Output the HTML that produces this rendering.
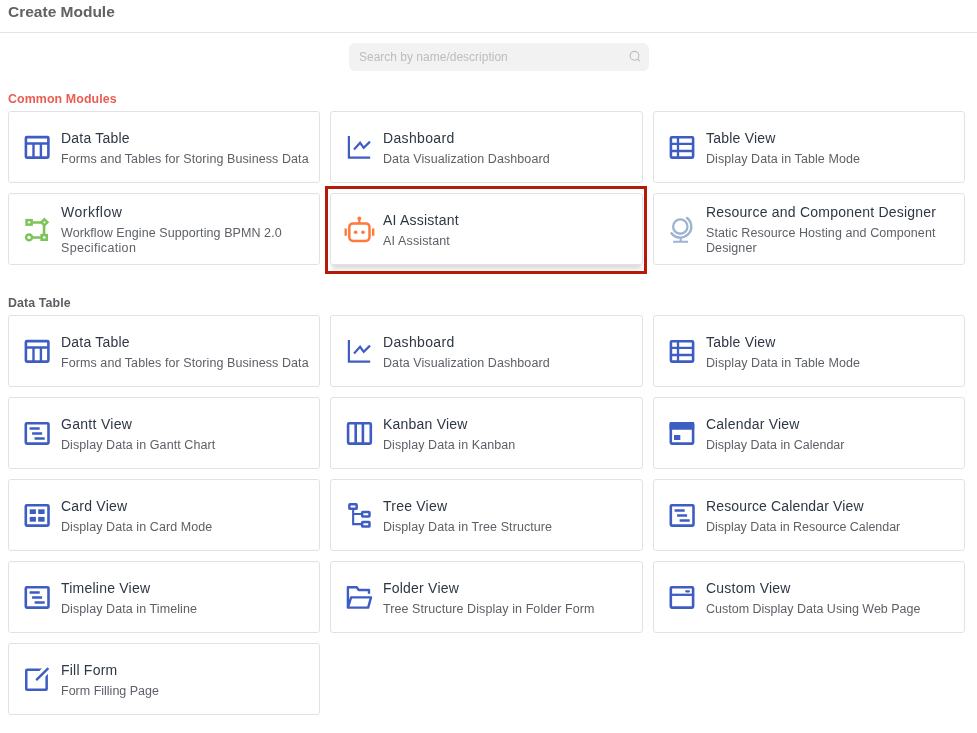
<!DOCTYPE html>
<html><head><meta charset="utf-8"><style>
html,body{margin:0;-webkit-font-smoothing:antialiased;padding:0;background:#fff;width:977px;height:733px;overflow:hidden;position:relative;font-family:"Liberation Sans",sans-serif}
.hdr{will-change:transform;position:absolute;left:8px;top:-0.5px;font-size:15.5px;font-weight:700;color:#616161;line-height:24px}
.hline{position:absolute;left:0;top:32px;width:977px;height:1px;background:#e4e4e4}
.search{will-change:transform;position:absolute;left:349px;top:43px;width:300px;height:28px;background:#f2f2f2;border-radius:6px}
.search .ph{position:absolute;left:10px;top:6px;font-size:12px;line-height:16px;color:#bdbdbd}
.sec{will-change:transform;position:absolute;left:8px;font-size:12.4px;letter-spacing:0.1px;font-weight:700;line-height:16px}
.card{will-change:transform;position:absolute;height:72px;box-sizing:border-box;border:1px solid #e0e2e6;border-radius:3px;background:#fff}
.card .ic{position:absolute;left:-1px;top:-1px}
.card .t{position:absolute;left:52px;font-size:14px;letter-spacing:0.22px;line-height:20px;color:#2e3744;white-space:nowrap}
.card .d{position:absolute;left:52px;font-size:12.5px;letter-spacing:0.08px;line-height:15px;color:#5d6167;white-space:nowrap}
.hl{position:absolute;left:325px;top:186px;width:322px;height:88px;box-sizing:border-box;border:3px solid #b5190a}
</style></head><body>
<div class="hdr">Create Module</div>
<div class="hline"></div>
<div class="search"><div class="ph">Search by name/description</div>
<svg style="position:absolute;left:278px;top:6px" width="16" height="16" viewBox="0 0 16 16"><circle cx="7.5" cy="6.8" r="4.4" stroke="#bcbcbc" stroke-width="1.1" fill="none"/><path d="M10.6 10L12.8 12.2" stroke="#bcbcbc" stroke-width="1.1"/></svg></div>
<div class="sec" style="top:91px;color:#eb5c51">Common Modules</div>
<div class="card" style="left:8px;top:111px;width:312px"><svg class="ic" width="60" height="72" viewBox="0 0 60 72"><rect x="17.9" y="26.1" width="22.5" height="20.5" rx="1" stroke="#3e5dc3" fill="none" stroke-width="2.6"/><path d="M17.9 32.5H40.4M25.5 32.5V46.6M32.9 32.5V46.6" stroke="#3e5dc3" fill="none" stroke-width="2.4"/></svg><div class="t" style="top:16px">Data Table</div><div class="d" style="top:40.3px">Forms and Tables for Storing Business Data</div></div><div class="card" style="left:330px;top:111px;width:313px"><svg class="ic" width="60" height="72" viewBox="0 0 60 72"><path d="M18.9 25.1V46.7H40.2" stroke="#3e5dc3" fill="none" stroke-width="2.2"/><path d="M24 38.5L30.1 31.8L33.7 36.8L40 30.6" stroke="#3e5dc3" fill="none" stroke-width="2.2"/></svg><div class="t" style="top:16px;letter-spacing:0.35px">Dashboard</div><div class="d" style="top:40.3px">Data Visualization Dashboard</div></div><div class="card" style="left:653px;top:111px;width:312px"><svg class="ic" width="60" height="72" viewBox="0 0 60 72"><rect x="17.9" y="26.2" width="22.2" height="20.4" rx="1" stroke="#3e5dc3" fill="none" stroke-width="2.6"/><path d="M17.9 32.9H40.1M17.9 40H40.1M25 26.2V46.6" stroke="#3e5dc3" fill="none" stroke-width="2.3"/></svg><div class="t" style="top:16px">Table View</div><div class="d" style="top:40.3px">Display Data in Table Mode</div></div><div class="card" style="left:8px;top:193px;width:312px"><svg class="ic" width="60" height="72" viewBox="0 0 60 72"><rect x="18.55" y="27.15" width="5.1" height="4.45" stroke="#7cc35a" stroke-width="2.5" fill="none"/><path d="M24.9 29.45H33.2M36.05 32V41.5M24 44.45H33" stroke="#7cc35a" stroke-width="2.6" fill="none"/><path d="M36.4 26.3L39.4 29.3L36.4 32.3L33.4 29.3Z" stroke="#7cc35a" stroke-width="2.5" fill="none"/><circle cx="21.05" cy="44.4" r="2.95" stroke="#7cc35a" stroke-width="2.5" fill="none"/><rect x="33.65" y="42.15" width="5.1" height="4.6" stroke="#7cc35a" stroke-width="2.5" fill="none"/></svg><div class="t" style="top:8px;letter-spacing:0.5px">Workflow</div><div class="d" style="top:32.3px">Workflow Engine Supporting BPMN 2.0<br><span style="letter-spacing:0.33px">Specification</span></div></div><div class="card" style="left:330px;top:193px;width:313px;box-shadow:0 6px 4px -2px rgba(0,0,0,0.14)"><svg class="ic" width="60" height="72" viewBox="0 0 60 72"><rect x="19.3" y="30.4" width="20.2" height="17.5" rx="3.6" stroke="#fd7a3c" stroke-width="2.5" fill="none"/><circle cx="29.3" cy="25.4" r="1.9" fill="#fd7a3c"/><path d="M29.3 25.4V30" stroke="#fd7a3c" stroke-width="2.2"/><path d="M15.7 35.5V42.8M43.2 35.5V42.8" stroke="#fd7a3c" stroke-width="2.4"/><circle cx="25.6" cy="39.3" r="1.8" fill="#fd7a3c"/><circle cx="33" cy="39.3" r="1.8" fill="#fd7a3c"/></svg><div class="t" style="top:16px">AI Assistant</div><div class="d" style="top:40.3px"><span style="letter-spacing:0.14px">AI Assistant</span></div></div><div class="card" style="left:653px;top:193px;width:312px"><svg class="ic" width="60" height="72" viewBox="0 0 60 72"><circle cx="27.3" cy="33.6" r="7.2" stroke="#9db3d2" stroke-width="2.35" fill="none"/><path d="M34.07 24.93A11 11 0 1 1 18.5 40.2" stroke="#9db3d2" stroke-width="2.4" fill="none" stroke-linecap="round"/><path d="M27.7 44.5V48M20.1 48.7H35.1" stroke="#9db3d2" stroke-width="2.1" fill="none"/></svg><div class="t" style="top:8px">Resource and Component Designer</div><div class="d" style="top:32.3px">Static Resource Hosting and Component<br>Designer</div></div>
<div class="sec" style="top:295px;color:#5d5e64">Data Table</div>
<div class="card" style="left:8px;top:315px;width:312px"><svg class="ic" width="60" height="72" viewBox="0 0 60 72"><rect x="17.9" y="26.1" width="22.5" height="20.5" rx="1" stroke="#3e5dc3" fill="none" stroke-width="2.6"/><path d="M17.9 32.5H40.4M25.5 32.5V46.6M32.9 32.5V46.6" stroke="#3e5dc3" fill="none" stroke-width="2.4"/></svg><div class="t" style="top:16px">Data Table</div><div class="d" style="top:40.3px">Forms and Tables for Storing Business Data</div></div><div class="card" style="left:330px;top:315px;width:313px"><svg class="ic" width="60" height="72" viewBox="0 0 60 72"><path d="M18.9 25.1V46.7H40.2" stroke="#3e5dc3" fill="none" stroke-width="2.2"/><path d="M24 38.5L30.1 31.8L33.7 36.8L40 30.6" stroke="#3e5dc3" fill="none" stroke-width="2.2"/></svg><div class="t" style="top:16px;letter-spacing:0.35px">Dashboard</div><div class="d" style="top:40.3px">Data Visualization Dashboard</div></div><div class="card" style="left:653px;top:315px;width:312px"><svg class="ic" width="60" height="72" viewBox="0 0 60 72"><rect x="17.9" y="26.2" width="22.2" height="20.4" rx="1" stroke="#3e5dc3" fill="none" stroke-width="2.6"/><path d="M17.9 32.9H40.1M17.9 40H40.1M25 26.2V46.6" stroke="#3e5dc3" fill="none" stroke-width="2.3"/></svg><div class="t" style="top:16px">Table View</div><div class="d" style="top:40.3px">Display Data in Table Mode</div></div><div class="card" style="left:8px;top:397px;width:312px"><svg class="ic" width="60" height="72" viewBox="0 0 60 72"><rect x="17.8" y="26.2" width="22.7" height="20.4" rx="1" stroke="#3e5dc3" fill="none" stroke-width="2.6"/><path d="M21.6 31.6H31.7M24.1 36.5H34.1M26.6 41.5H36.7" stroke="#3e5dc3" stroke-width="2.5" fill="none"/></svg><div class="t" style="top:16px;letter-spacing:0.3px">Gantt View</div><div class="d" style="top:40.3px">Display Data in Gantt Chart</div></div><div class="card" style="left:330px;top:397px;width:313px"><svg class="ic" width="60" height="72" viewBox="0 0 60 72"><rect x="18.1" y="26.2" width="22.7" height="20.4" rx="1" stroke="#3e5dc3" fill="none" stroke-width="2.6"/><path d="M25.7 26.2V46.6M32.9 26.2V46.6" stroke="#3e5dc3" fill="none" stroke-width="2.6"/></svg><div class="t" style="top:16px">Kanban View</div><div class="d" style="top:40.3px">Display Data in Kanban</div></div><div class="card" style="left:653px;top:397px;width:312px"><svg class="ic" width="60" height="72" viewBox="0 0 60 72"><rect x="17.8" y="26.2" width="22.3" height="20.4" rx="1" stroke="#3e5dc3" fill="none" stroke-width="2.6"/><rect x="16.6" y="25.1" width="24.6" height="7.6" rx="1" fill="#3e5dc3"/><rect x="21" y="38" width="6.3" height="5" fill="#3e5dc3"/></svg><div class="t" style="top:16px">Calendar View</div><div class="d" style="top:40.3px"><span style="letter-spacing:0.01px">Display Data in Calendar</span></div></div><div class="card" style="left:8px;top:479px;width:312px"><svg class="ic" width="60" height="72" viewBox="0 0 60 72"><rect x="17.8" y="26.2" width="22.7" height="20.4" rx="1" stroke="#3e5dc3" fill="none" stroke-width="2.6"/><rect x="21.7" y="30.3" width="6.2" height="4.7" fill="#3e5dc3"/><rect x="30.2" y="30.3" width="6.4" height="4.7" fill="#3e5dc3"/><rect x="21.7" y="37.9" width="6.2" height="4.8" fill="#3e5dc3"/><rect x="30.2" y="37.9" width="6.4" height="4.8" fill="#3e5dc3"/></svg><div class="t" style="top:16px">Card View</div><div class="d" style="top:40.3px">Display Data in Card Mode</div></div><div class="card" style="left:330px;top:479px;width:313px"><svg class="ic" width="60" height="72" viewBox="0 0 60 72"><rect x="19.35" y="25.25" width="7.3" height="4.6" rx="0.7" stroke="#3e5dc3" fill="none" stroke-width="2.5"/><rect x="32.15" y="32.9" width="7.35" height="4.6" rx="0.7" stroke="#3e5dc3" fill="none" stroke-width="2.5"/><rect x="32.15" y="43" width="7.35" height="4.6" rx="0.7" stroke="#3e5dc3" fill="none" stroke-width="2.5"/><path d="M23.15 29.85V45.1H31M23.15 35H31" stroke="#3e5dc3" fill="none" stroke-width="2.1"/></svg><div class="t" style="top:16px">Tree View</div><div class="d" style="top:40.3px">Display Data in Tree Structure</div></div><div class="card" style="left:653px;top:479px;width:312px"><svg class="ic" width="60" height="72" viewBox="0 0 60 72"><rect x="17.8" y="26.2" width="22.7" height="20.4" rx="1" stroke="#3e5dc3" fill="none" stroke-width="2.6"/><path d="M21.6 31.6H31.7M24.1 36.5H34.1M26.6 41.5H36.7" stroke="#3e5dc3" stroke-width="2.5" fill="none"/></svg><div class="t" style="top:16px;letter-spacing:0.14px">Resource Calendar View</div><div class="d" style="top:40.3px"><span style="letter-spacing:-0.03px">Display Data in Resource Calendar</span></div></div><div class="card" style="left:8px;top:561px;width:312px"><svg class="ic" width="60" height="72" viewBox="0 0 60 72"><rect x="17.8" y="26.2" width="22.7" height="20.4" rx="1" stroke="#3e5dc3" fill="none" stroke-width="2.6"/><path d="M21.6 31.6H31.7M24.1 36.5H34.1M26.6 41.5H36.7" stroke="#3e5dc3" stroke-width="2.5" fill="none"/></svg><div class="t" style="top:16px">Timeline View</div><div class="d" style="top:40.3px">Display Data in Timeline</div></div><div class="card" style="left:330px;top:561px;width:313px"><svg class="ic" width="60" height="72" viewBox="0 0 60 72"><path d="M17.9 46.6V26.3H26.7L28.7 29H39V32.7" stroke="#3e5dc3" stroke-width="2.4" fill="none" stroke-linejoin="round"/><path d="M17.9 46.6L21.1 36.4H41L38.2 46.6Z" stroke="#3e5dc3" stroke-width="2.4" fill="none" stroke-linejoin="round"/></svg><div class="t" style="top:16px">Folder View</div><div class="d" style="top:40.3px">Tree Structure Display in Folder Form</div></div><div class="card" style="left:653px;top:561px;width:312px"><svg class="ic" width="60" height="72" viewBox="0 0 60 72"><rect x="17.8" y="26.2" width="22.3" height="20.4" rx="1" stroke="#3e5dc3" fill="none" stroke-width="2.6"/><path d="M17.8 33.8H40.1" stroke="#3e5dc3" fill="none" stroke-width="2.3"/><path d="M33.2 30.3H35.9" stroke="#3e5dc3" stroke-width="2.2" stroke-linecap="round"/></svg><div class="t" style="top:16px">Custom View</div><div class="d" style="top:40.3px"><span style="letter-spacing:0.0px">Custom Display Data Using Web Page</span></div></div><div class="card" style="left:8px;top:643px;width:312px"><svg class="ic" width="60" height="72" viewBox="0 0 60 72"><rect x="18.25" y="26.85" width="20.4" height="19.9" rx="0.8" stroke="#3e5dc3" stroke-width="2.5" fill="none"/><path d="M30 35.15L45 20.15" stroke="#fff" stroke-width="8.1"/><path d="M28.2 37.1L40.4 25.2" stroke="#3e5dc3" stroke-width="2.4"/></svg><div class="t" style="top:16px">Fill Form</div><div class="d" style="top:40.3px"><span style="letter-spacing:0.0px">Form Filling Page</span></div></div>
<div class="hl"></div>
</body></html>
